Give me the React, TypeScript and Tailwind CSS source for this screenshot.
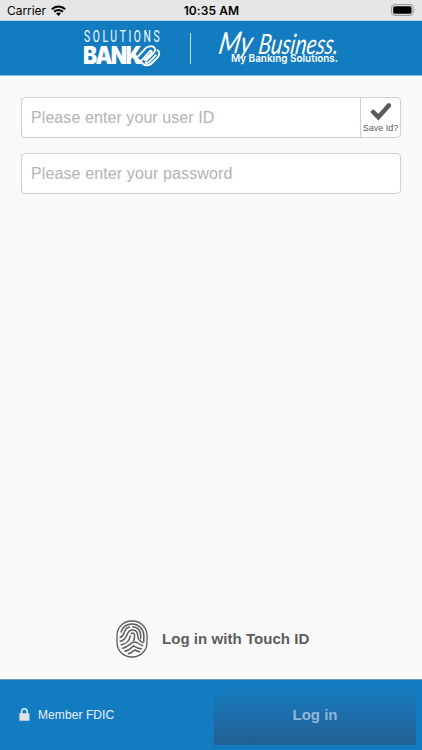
function StatusBar() {
  return (
    <div className="grid h-[21px] shrink-0 grid-cols-3 items-center border-b border-[#b3cee0] bg-[#e6e6e6] pl-[7px] pr-[6px] font-['Inter','Liberation_Sans',sans-serif] text-black">
      <div className="flex items-center gap-[5px] pt-px">
        <span className="text-[12px] tracking-[-0.05px]">Carrier</span>
        <svg viewBox="0 0 15 11" className="mb-px h-[11px] w-[15px]">
          <g fill="none" stroke="currentColor" strokeWidth="2">
            <path d="M0.8 4.3 C4.6 0.5 10.4 0.5 14.2 4.3" />
            <path d="M3.1 6.8 C5.6 4.3 9.4 4.3 11.9 6.8" />
          </g>
          <path d="M7.5 10.9 L5.1 8.5 C6.5 7.2 8.5 7.2 9.9 8.5 Z" />
        </svg>
      </div>
      <span className="pt-px text-center text-[12px] font-semibold tracking-[0.1px]">10:35 AM</span>
      <svg viewBox="0 0 25 12" className="h-3 w-[25px] justify-self-end">
        <rect x="0.6" y="0.6" width="21.5" height="10.8" rx="3" fill="none" stroke="#949494" />
        <rect x="2.2" y="2.2" width="18.3" height="7.6" rx="1.6" />
        <path d="M23.2 4.2 Q24.7 6 23.2 7.8 Z" fill="#949494" />
      </svg>
    </div>
  );
}

function BankLogo() {
  return (
    <svg viewBox="0 0 77 37" className="h-[37px] w-[77px] overflow-visible" fill="#fff">
      <text
        transform="scale(0.62 1)"
        x="0"
        y="12.2"
        textLength="122"
        fontSize="16.6"
        fontWeight="400"
        className="font-['Roboto',sans-serif]"
      >
        SOLUTIONS
      </text>
      <text
        x="-1"
        y="34.4"
        textLength="57"
        lengthAdjust="spacingAndGlyphs"
        fontSize="24"
        fontWeight="900"
        letterSpacing="-1.8"
        className="font-['Inter','Liberation_Sans',sans-serif]"
      >
        BANK
      </text>
      {/* two interlocking loops next to the K */}
      <g fill="none" stroke="#fff" strokeWidth="1.9" strokeLinecap="round" strokeLinejoin="round">
        <path d="M54 26.5 L61.5 18.4 C63.5 16.2 68 15.4 70.2 17.4 C72 19.2 71 21.6 69.2 23.4 L62 30.8" />
        <path d="M57.6 30.4 L65.4 21.6 Q66.8 20.2 67.6 21.2 Q68.2 22 67.2 23.2 L60.6 29.8" />
        <path d="M73.4 20 C76.4 22.4 75.6 25.2 73.4 27.6 L68 33 C65.8 35.4 61.4 36.2 59.2 34 L56 30.8 L54 29.4" />
        <path d="M61.6 33 Q64 33.4 65.6 31.6 L71.8 25.2" />
      </g>
    </svg>
  );
}

function BusinessLogo() {
  return (
    <svg viewBox="0 0 124 37" className="h-[37px] w-[124px] overflow-visible" fill="#fff">
      <g fontStyle="italic" fontWeight="400" className="font-['Lato','Liberation_Sans',sans-serif]">
        <text transform="translate(0.5 24) rotate(-2) skewX(-12)" fontSize="30" textLength="33.5" lengthAdjust="spacingAndGlyphs">
          My
        </text>
        <text transform="translate(40.5 24) skewX(-8)" fontSize="28" textLength="80" lengthAdjust="spacingAndGlyphs">
          Business.
        </text>
      </g>
      <text
        x="14"
        y="32.4"
        textLength="107"
        lengthAdjust="spacingAndGlyphs"
        fontSize="11"
        fontWeight="600"
        className="font-['Inter','Liberation_Sans',sans-serif]"
      >
        My Banking Solutions.
      </text>
    </svg>
  );
}

function Header() {
  return (
    <header className="flex h-[55px] shrink-0 items-center border-b border-[#8dbbdb] bg-[#137bc0] pl-[84px]">
      <BankLogo />
      <div className="ml-[29px] h-[31px] w-px bg-[#c5dff0]" />
      <div className="ml-[26px]">
        <BusinessLogo />
      </div>
    </header>
  );
}

function Fingerprint() {
  return (
    <svg
      viewBox="0 0 32 38"
      className="h-[38px] w-8"
      fill="none"
      stroke="#5d5d5d"
      strokeWidth="1.5"
      strokeLinecap="round"
    >
      <rect x="1" y="1" width="30" height="36" rx="14.5" strokeWidth="1.3" />
      <path d="M5 12 C7 6.5 11 4 16 4 C22.5 4 27.5 9 27.8 15 V22" />
      <path d="M4.2 17.5 C7.4 16.5 7.6 13.5 8.6 11.2 C9.6 9 11 7.6 13.3 7" />
      <path d="M16.8 6.8 C21.8 7.4 24.6 11 24.7 15.5 V18.5" />
      <path d="M4.2 21.2 C8.5 20.4 10 17.5 11.3 14.2 C12.5 11 14 10 16.3 10 C19.8 10 21.6 12.4 21.7 15.6 C21.8 18.7 22.8 20.8 26.6 22.6" />
      <path d="M5.2 24.8 C10.4 24 13.4 20.8 14.2 16" />
      <path d="M15.3 13.4 C17.4 12.4 18.6 14 18.6 15.8 C18.6 17.7 18.3 19.2 17.6 20.6" />
      <path d="M6.6 28.2 C11 27.2 13 25 15.5 23.2 C17.8 21.6 19.6 21.6 21.5 23 C23 24.2 24.5 25 26.6 25.6" />
      <path d="M9 31.3 C13 30.4 15.5 27.8 17.6 25.8 C20 27.4 22.5 28.4 25.4 28.8" />
      <path d="M12.5 33.8 C15.6 32.8 17.2 31 19 29.8 C20.4 30.8 21.8 31.3 23.4 31.7" />
    </svg>
  );
}

function Footer() {
  return (
    <footer className="flex h-[71px] shrink-0 items-start border-t border-[#6f98b8] bg-[#137bc0]">
      <div className="flex h-[70px] w-[214px] items-center pl-[19px]">
        <svg viewBox="0 0 11 13" className="mb-px h-[13px] w-[11px]">
          <path d="M2.6 6 V3.6 C2.6 -0.1 8.2 -0.1 8.2 3.6 V6" fill="none" stroke="#e9eff4" strokeWidth="1.5" />
          <rect x="0.4" y="5.3" width="10" height="7.4" rx="0.5" fill="#e2e2e2" />
        </svg>
        <span className="ml-[8px] text-[12px] tracking-[0.08px] text-[#eaf4fb]">Member FDIC</span>
      </div>
      <button className="mt-[8px] h-[57px] w-[202px] bg-linear-to-b from-[#137bc0] to-[#225f92] pb-[3px] text-[15px] font-bold text-[#8fb8d6]">
        Log in
      </button>
    </footer>
  );
}

export default function App() {
  return (
    <div className="flex h-[750px] w-[422px] flex-col overflow-hidden bg-[#f9f9f9] font-['Liberation_Sans',Arial,sans-serif]">
      <StatusBar />
      <Header />
      <main className="flex flex-1 flex-col px-[21px] pt-[21px]">
        <div className="flex h-[41px] rounded-[4px] border border-[#cfcfcf] bg-white">
          <input
            type="text"
            placeholder="Please enter your user ID"
            className="min-w-0 flex-1 pl-[9px] text-[16px] tracking-[0.08px] outline-none placeholder:text-[#b3b3b3]"
          />
          <button className="flex w-[40px] flex-col items-center border-l border-[#cfcfcf] pt-[4px] text-[#5b5b5b]">
            <svg viewBox="0 0 22 19" className="h-[19px] w-[22px]">
              <path
                d="M3.2 10 L8.3 15.2 L18.8 3.5"
                fill="none"
                stroke="currentColor"
                strokeWidth="4.6"
                strokeLinecap="round"
              />
            </svg>
            <span className="mt-[2px] text-[9px] leading-[11px] whitespace-nowrap">Save Id?</span>
          </button>
        </div>
        <input
          type="password"
          placeholder="Please enter your password"
          className="mt-[15px] h-[41px] rounded-[4px] border border-[#cfcfcf] bg-white pt-px pl-[9px] text-[16px] tracking-[0.12px] outline-none placeholder:text-[#b3b3b3]"
        />
        <button className="mt-auto mb-[21px] ml-[95px] flex items-center gap-[14px] self-start text-[15px] font-bold tracking-[0.05px] text-[#5d5d5d]">
          <Fingerprint />
          <span className="pt-px">Log in with Touch ID</span>
        </button>
      </main>
      <Footer />
    </div>
  );
}
